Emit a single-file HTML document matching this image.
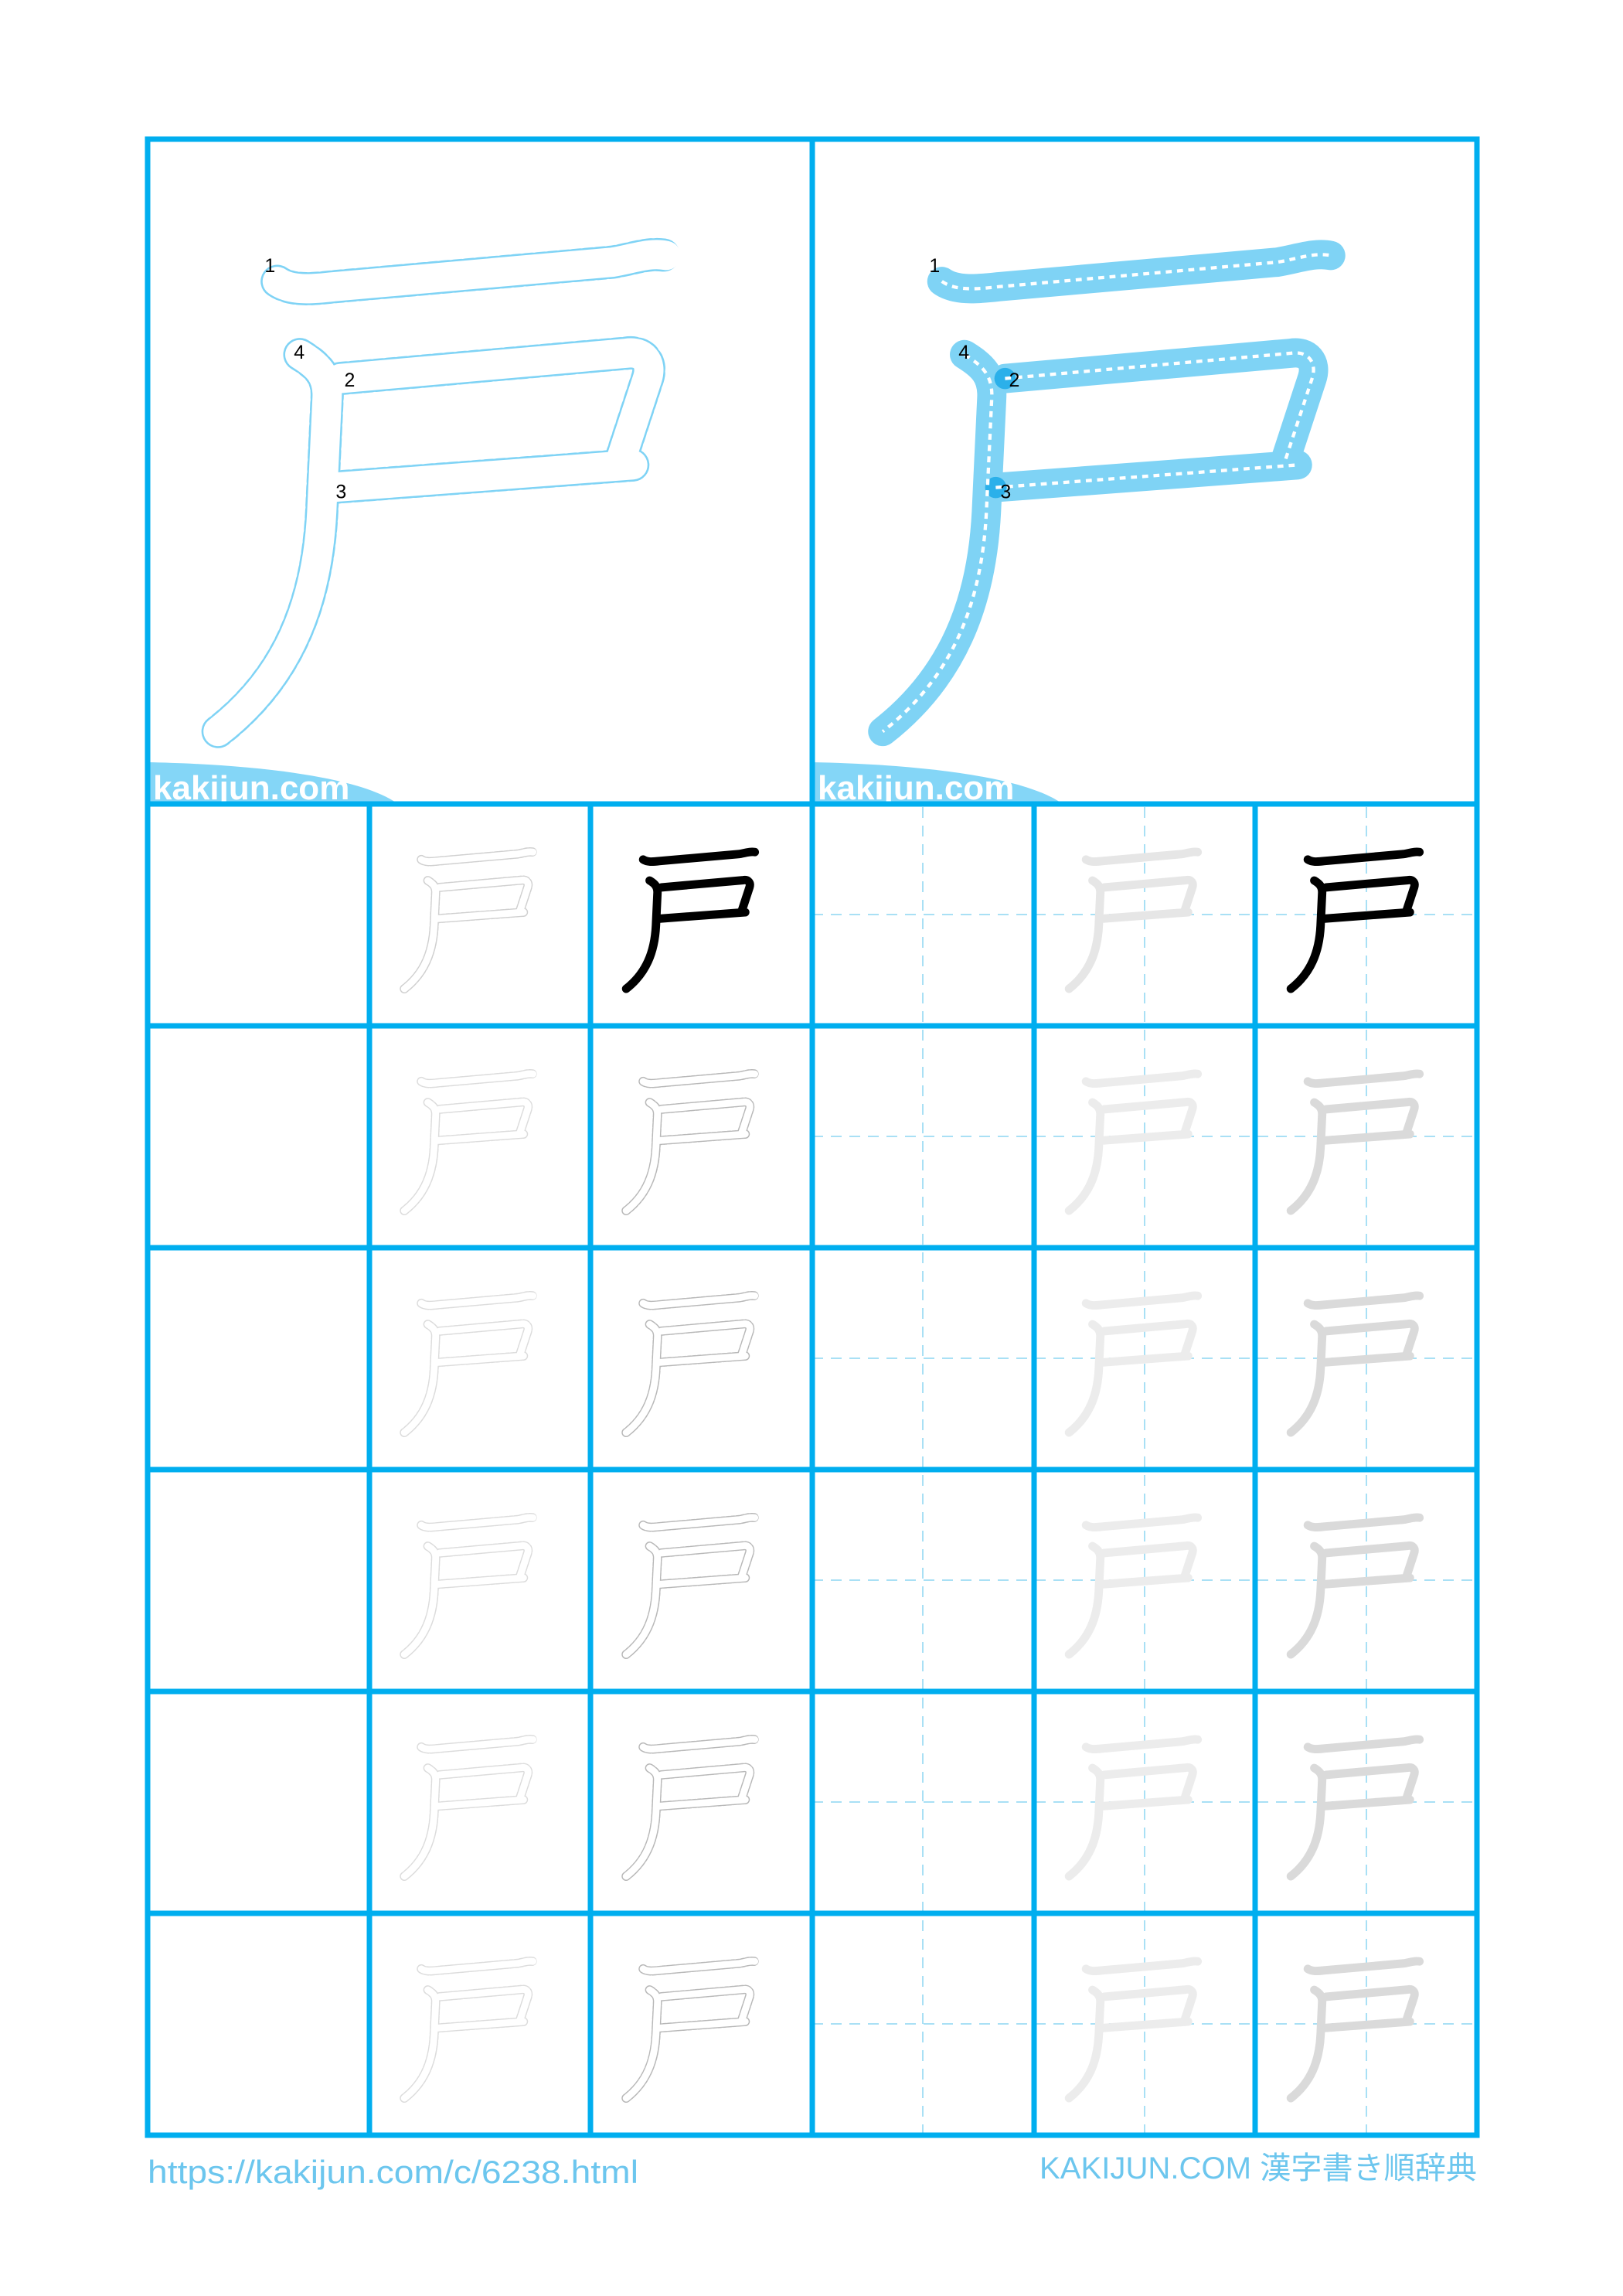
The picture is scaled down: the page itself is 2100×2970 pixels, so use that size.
<!DOCTYPE html>
<html><head><meta charset="utf-8"><style>
html,body{margin:0;padding:0;background:#fff}
svg{display:block}
</style></head><body>
<svg width="2100" height="2970" viewBox="0 0 2100 2970" xmlns="http://www.w3.org/2000/svg">
<rect width="2100" height="2970" fill="#fff"/>

<g stroke="#a9e0f5" stroke-width="2" stroke-dasharray="14 10" fill="none">
<line x1="1194" y1="1044" x2="1194" y2="2762"/>
<line x1="1481" y1="1044" x2="1481" y2="2762"/>
<line x1="1768" y1="1044" x2="1768" y2="2762"/>
<line x1="1051" y1="1183" x2="1911" y2="1183"/>
<line x1="1051" y1="1470" x2="1911" y2="1470"/>
<line x1="1051" y1="1757" x2="1911" y2="1757"/>
<line x1="1051" y1="2044" x2="1911" y2="2044"/>
<line x1="1051" y1="2331" x2="1911" y2="2331"/>
<line x1="1051" y1="2618" x2="1911" y2="2618"/>
</g>

<g transform="translate(191,180) scale(0.86)" fill="none" stroke-linecap="round" stroke-linejoin="round">
<g stroke="#7fd3f5" stroke-width="50" stroke-dasharray="10 8">
<path d="M195,214 C215,228 245,226 280,222 L700,185 C730,180 755,170 780,175"/>
<path d="M290,360 L720,322 C745,318 760,335 752,360 L712,482"/>
<path d="M276,524 L730,490"/>
<path d="M229,324 C255,340 272,355 270,390 L262,560 C255,700 210,810 106,891"/>
</g>
<g stroke="#fff" stroke-width="44">
<path d="M195,214 C215,228 245,226 280,222 L700,185 C730,180 755,170 780,175"/>
<path d="M290,360 L720,322 C745,318 760,335 752,360 L712,482"/>
<path d="M276,524 L730,490"/>
<path d="M229,324 C255,340 272,355 270,390 L262,560 C255,700 210,810 106,891"/>
</g>
<g font-family="Liberation Sans, sans-serif" font-size="29" fill="#000" stroke="none">
<text x="176" y="200">1</text><text x="220" y="330">4</text><text x="296" y="372">2</text><text x="283" y="540">3</text>
</g>
</g>

<g transform="translate(1051,180) scale(0.86)" fill="none" stroke-linecap="round" stroke-linejoin="round">
<g stroke="#7fd3f5" stroke-width="44">
<path d="M195,214 C215,228 245,226 280,222 L700,185 C730,180 755,170 780,175"/>
<path d="M290,360 L720,322 C745,318 760,335 752,360 L712,482"/>
<path d="M276,524 L730,490"/>
<path d="M229,324 C255,340 272,355 270,390 L262,560 C255,700 210,810 106,891"/>
</g>
<circle cx="290" cy="360" r="16" fill="#2bb0ea"/>
<circle cx="276" cy="524" r="16" fill="#2bb0ea"/>
<g stroke="#fff" stroke-width="5" stroke-dasharray="9 8" stroke-linecap="butt">
<path d="M195,214 C215,228 245,226 280,222 L700,185 C730,180 755,170 780,175"/>
<path d="M290,360 L720,322 C745,318 760,335 752,360 L712,482"/>
<path d="M276,524 L730,490"/>
<path d="M229,324 C255,340 272,355 270,390 L262,560 C255,700 210,810 106,891"/>
</g>
<g font-family="Liberation Sans, sans-serif" font-size="29" fill="#000" stroke="none">
<text x="176" y="200">1</text><text x="220" y="330">4</text><text x="296" y="372">2</text><text x="283" y="540">3</text>
</g>
</g>

<path d="M191,986 C300,988 460,1000 515,1040 L191,1040 Z" fill="#84d6f7"/>
<path d="M1051,986 C1160,988 1320,1000 1375,1040 L1051,1040 Z" fill="#84d6f7"/>
<text x="198" y="1034" font-family="Liberation Sans, sans-serif" font-weight="bold" font-size="44" fill="#fff">kakijun.com</text>
<text x="1058" y="1034" font-family="Liberation Sans, sans-serif" font-weight="bold" font-size="44" fill="#fff">kakijun.com</text>

<g fill="none" stroke-linecap="round" stroke-linejoin="round">
<!-- Row 1 -->
<g transform="translate(497,1059) scale(0.247)"><g stroke="#d0d0d0" stroke-width="48" stroke-dasharray="14 12"><path d="M195,214 C215,228 245,226 280,222 L700,185 C730,180 755,170 780,175"/><path d="M290,360 L720,322 C745,318 760,335 752,360 L712,482"/><path d="M276,524 L730,490"/><path d="M229,324 C255,340 272,355 270,390 L262,560 C255,700 210,810 106,891"/></g><g stroke="#fff" stroke-width="36"><path d="M195,214 C215,228 245,226 280,222 L700,185 C730,180 755,170 780,175"/><path d="M290,360 L720,322 C745,318 760,335 752,360 L712,482"/><path d="M276,524 L730,490"/><path d="M229,324 C255,340 272,355 270,390 L262,560 C255,700 210,810 106,891"/></g></g>
<g transform="translate(784,1059) scale(0.247)" stroke="#000" stroke-width="44"><path d="M195,214 C215,228 245,226 280,222 L700,185 C730,180 755,170 780,175"/><path d="M290,360 L720,322 C745,318 760,335 752,360 L712,482"/><path d="M276,524 L730,490"/><path d="M229,324 C255,340 272,355 270,390 L262,560 C255,700 210,810 106,891"/></g>
<g transform="translate(1357,1059) scale(0.247)" stroke="#e6e6e6" stroke-width="44"><path d="M195,214 C215,228 245,226 280,222 L700,185 C730,180 755,170 780,175"/><path d="M290,360 L720,322 C745,318 760,335 752,360 L712,482"/><path d="M276,524 L730,490"/><path d="M229,324 C255,340 272,355 270,390 L262,560 C255,700 210,810 106,891"/></g>
<g transform="translate(1644,1059) scale(0.247)" stroke="#000" stroke-width="44"><path d="M195,214 C215,228 245,226 280,222 L700,185 C730,180 755,170 780,175"/><path d="M290,360 L720,322 C745,318 760,335 752,360 L712,482"/><path d="M276,524 L730,490"/><path d="M229,324 C255,340 272,355 270,390 L262,560 C255,700 210,810 106,891"/></g>

<!-- Row 2 -->
<g transform="translate(497,1346) scale(0.247)"><g stroke="#dcdcdc" stroke-width="48" stroke-dasharray="14 12"><path d="M195,214 C215,228 245,226 280,222 L700,185 C730,180 755,170 780,175"/><path d="M290,360 L720,322 C745,318 760,335 752,360 L712,482"/><path d="M276,524 L730,490"/><path d="M229,324 C255,340 272,355 270,390 L262,560 C255,700 210,810 106,891"/></g><g stroke="#fff" stroke-width="36"><path d="M195,214 C215,228 245,226 280,222 L700,185 C730,180 755,170 780,175"/><path d="M290,360 L720,322 C745,318 760,335 752,360 L712,482"/><path d="M276,524 L730,490"/><path d="M229,324 C255,340 272,355 270,390 L262,560 C255,700 210,810 106,891"/></g></g>
<g transform="translate(784,1346) scale(0.247)"><g stroke="#b8b8b8" stroke-width="48" stroke-dasharray="14 12"><path d="M195,214 C215,228 245,226 280,222 L700,185 C730,180 755,170 780,175"/><path d="M290,360 L720,322 C745,318 760,335 752,360 L712,482"/><path d="M276,524 L730,490"/><path d="M229,324 C255,340 272,355 270,390 L262,560 C255,700 210,810 106,891"/></g><g stroke="#fff" stroke-width="36"><path d="M195,214 C215,228 245,226 280,222 L700,185 C730,180 755,170 780,175"/><path d="M290,360 L720,322 C745,318 760,335 752,360 L712,482"/><path d="M276,524 L730,490"/><path d="M229,324 C255,340 272,355 270,390 L262,560 C255,700 210,810 106,891"/></g></g>
<g transform="translate(1357,1346) scale(0.247)" stroke="#ececec" stroke-width="44"><path d="M195,214 C215,228 245,226 280,222 L700,185 C730,180 755,170 780,175"/><path d="M290,360 L720,322 C745,318 760,335 752,360 L712,482"/><path d="M276,524 L730,490"/><path d="M229,324 C255,340 272,355 270,390 L262,560 C255,700 210,810 106,891"/></g>
<g transform="translate(1644,1346) scale(0.247)" stroke="#dadada" stroke-width="44"><path d="M195,214 C215,228 245,226 280,222 L700,185 C730,180 755,170 780,175"/><path d="M290,360 L720,322 C745,318 760,335 752,360 L712,482"/><path d="M276,524 L730,490"/><path d="M229,324 C255,340 272,355 270,390 L262,560 C255,700 210,810 106,891"/></g>

<!-- Row 3 -->
<g transform="translate(497,1633) scale(0.247)"><g stroke="#dcdcdc" stroke-width="48" stroke-dasharray="14 12"><path d="M195,214 C215,228 245,226 280,222 L700,185 C730,180 755,170 780,175"/><path d="M290,360 L720,322 C745,318 760,335 752,360 L712,482"/><path d="M276,524 L730,490"/><path d="M229,324 C255,340 272,355 270,390 L262,560 C255,700 210,810 106,891"/></g><g stroke="#fff" stroke-width="36"><path d="M195,214 C215,228 245,226 280,222 L700,185 C730,180 755,170 780,175"/><path d="M290,360 L720,322 C745,318 760,335 752,360 L712,482"/><path d="M276,524 L730,490"/><path d="M229,324 C255,340 272,355 270,390 L262,560 C255,700 210,810 106,891"/></g></g>
<g transform="translate(784,1633) scale(0.247)"><g stroke="#b8b8b8" stroke-width="48" stroke-dasharray="14 12"><path d="M195,214 C215,228 245,226 280,222 L700,185 C730,180 755,170 780,175"/><path d="M290,360 L720,322 C745,318 760,335 752,360 L712,482"/><path d="M276,524 L730,490"/><path d="M229,324 C255,340 272,355 270,390 L262,560 C255,700 210,810 106,891"/></g><g stroke="#fff" stroke-width="36"><path d="M195,214 C215,228 245,226 280,222 L700,185 C730,180 755,170 780,175"/><path d="M290,360 L720,322 C745,318 760,335 752,360 L712,482"/><path d="M276,524 L730,490"/><path d="M229,324 C255,340 272,355 270,390 L262,560 C255,700 210,810 106,891"/></g></g>
<g transform="translate(1357,1633) scale(0.247)" stroke="#ececec" stroke-width="44"><path d="M195,214 C215,228 245,226 280,222 L700,185 C730,180 755,170 780,175"/><path d="M290,360 L720,322 C745,318 760,335 752,360 L712,482"/><path d="M276,524 L730,490"/><path d="M229,324 C255,340 272,355 270,390 L262,560 C255,700 210,810 106,891"/></g>
<g transform="translate(1644,1633) scale(0.247)" stroke="#dadada" stroke-width="44"><path d="M195,214 C215,228 245,226 280,222 L700,185 C730,180 755,170 780,175"/><path d="M290,360 L720,322 C745,318 760,335 752,360 L712,482"/><path d="M276,524 L730,490"/><path d="M229,324 C255,340 272,355 270,390 L262,560 C255,700 210,810 106,891"/></g>

<!-- Row 4 -->
<g transform="translate(497,1920) scale(0.247)"><g stroke="#dcdcdc" stroke-width="48" stroke-dasharray="14 12"><path d="M195,214 C215,228 245,226 280,222 L700,185 C730,180 755,170 780,175"/><path d="M290,360 L720,322 C745,318 760,335 752,360 L712,482"/><path d="M276,524 L730,490"/><path d="M229,324 C255,340 272,355 270,390 L262,560 C255,700 210,810 106,891"/></g><g stroke="#fff" stroke-width="36"><path d="M195,214 C215,228 245,226 280,222 L700,185 C730,180 755,170 780,175"/><path d="M290,360 L720,322 C745,318 760,335 752,360 L712,482"/><path d="M276,524 L730,490"/><path d="M229,324 C255,340 272,355 270,390 L262,560 C255,700 210,810 106,891"/></g></g>
<g transform="translate(784,1920) scale(0.247)"><g stroke="#b8b8b8" stroke-width="48" stroke-dasharray="14 12"><path d="M195,214 C215,228 245,226 280,222 L700,185 C730,180 755,170 780,175"/><path d="M290,360 L720,322 C745,318 760,335 752,360 L712,482"/><path d="M276,524 L730,490"/><path d="M229,324 C255,340 272,355 270,390 L262,560 C255,700 210,810 106,891"/></g><g stroke="#fff" stroke-width="36"><path d="M195,214 C215,228 245,226 280,222 L700,185 C730,180 755,170 780,175"/><path d="M290,360 L720,322 C745,318 760,335 752,360 L712,482"/><path d="M276,524 L730,490"/><path d="M229,324 C255,340 272,355 270,390 L262,560 C255,700 210,810 106,891"/></g></g>
<g transform="translate(1357,1920) scale(0.247)" stroke="#ececec" stroke-width="44"><path d="M195,214 C215,228 245,226 280,222 L700,185 C730,180 755,170 780,175"/><path d="M290,360 L720,322 C745,318 760,335 752,360 L712,482"/><path d="M276,524 L730,490"/><path d="M229,324 C255,340 272,355 270,390 L262,560 C255,700 210,810 106,891"/></g>
<g transform="translate(1644,1920) scale(0.247)" stroke="#dadada" stroke-width="44"><path d="M195,214 C215,228 245,226 280,222 L700,185 C730,180 755,170 780,175"/><path d="M290,360 L720,322 C745,318 760,335 752,360 L712,482"/><path d="M276,524 L730,490"/><path d="M229,324 C255,340 272,355 270,390 L262,560 C255,700 210,810 106,891"/></g>

<!-- Row 5 -->
<g transform="translate(497,2207) scale(0.247)"><g stroke="#dcdcdc" stroke-width="48" stroke-dasharray="14 12"><path d="M195,214 C215,228 245,226 280,222 L700,185 C730,180 755,170 780,175"/><path d="M290,360 L720,322 C745,318 760,335 752,360 L712,482"/><path d="M276,524 L730,490"/><path d="M229,324 C255,340 272,355 270,390 L262,560 C255,700 210,810 106,891"/></g><g stroke="#fff" stroke-width="36"><path d="M195,214 C215,228 245,226 280,222 L700,185 C730,180 755,170 780,175"/><path d="M290,360 L720,322 C745,318 760,335 752,360 L712,482"/><path d="M276,524 L730,490"/><path d="M229,324 C255,340 272,355 270,390 L262,560 C255,700 210,810 106,891"/></g></g>
<g transform="translate(784,2207) scale(0.247)"><g stroke="#b8b8b8" stroke-width="48" stroke-dasharray="14 12"><path d="M195,214 C215,228 245,226 280,222 L700,185 C730,180 755,170 780,175"/><path d="M290,360 L720,322 C745,318 760,335 752,360 L712,482"/><path d="M276,524 L730,490"/><path d="M229,324 C255,340 272,355 270,390 L262,560 C255,700 210,810 106,891"/></g><g stroke="#fff" stroke-width="36"><path d="M195,214 C215,228 245,226 280,222 L700,185 C730,180 755,170 780,175"/><path d="M290,360 L720,322 C745,318 760,335 752,360 L712,482"/><path d="M276,524 L730,490"/><path d="M229,324 C255,340 272,355 270,390 L262,560 C255,700 210,810 106,891"/></g></g>
<g transform="translate(1357,2207) scale(0.247)" stroke="#ececec" stroke-width="44"><path d="M195,214 C215,228 245,226 280,222 L700,185 C730,180 755,170 780,175"/><path d="M290,360 L720,322 C745,318 760,335 752,360 L712,482"/><path d="M276,524 L730,490"/><path d="M229,324 C255,340 272,355 270,390 L262,560 C255,700 210,810 106,891"/></g>
<g transform="translate(1644,2207) scale(0.247)" stroke="#dadada" stroke-width="44"><path d="M195,214 C215,228 245,226 280,222 L700,185 C730,180 755,170 780,175"/><path d="M290,360 L720,322 C745,318 760,335 752,360 L712,482"/><path d="M276,524 L730,490"/><path d="M229,324 C255,340 272,355 270,390 L262,560 C255,700 210,810 106,891"/></g>

<!-- Row 6 -->
<g transform="translate(497,2494) scale(0.247)"><g stroke="#dcdcdc" stroke-width="48" stroke-dasharray="14 12"><path d="M195,214 C215,228 245,226 280,222 L700,185 C730,180 755,170 780,175"/><path d="M290,360 L720,322 C745,318 760,335 752,360 L712,482"/><path d="M276,524 L730,490"/><path d="M229,324 C255,340 272,355 270,390 L262,560 C255,700 210,810 106,891"/></g><g stroke="#fff" stroke-width="36"><path d="M195,214 C215,228 245,226 280,222 L700,185 C730,180 755,170 780,175"/><path d="M290,360 L720,322 C745,318 760,335 752,360 L712,482"/><path d="M276,524 L730,490"/><path d="M229,324 C255,340 272,355 270,390 L262,560 C255,700 210,810 106,891"/></g></g>
<g transform="translate(784,2494) scale(0.247)"><g stroke="#b8b8b8" stroke-width="48" stroke-dasharray="14 12"><path d="M195,214 C215,228 245,226 280,222 L700,185 C730,180 755,170 780,175"/><path d="M290,360 L720,322 C745,318 760,335 752,360 L712,482"/><path d="M276,524 L730,490"/><path d="M229,324 C255,340 272,355 270,390 L262,560 C255,700 210,810 106,891"/></g><g stroke="#fff" stroke-width="36"><path d="M195,214 C215,228 245,226 280,222 L700,185 C730,180 755,170 780,175"/><path d="M290,360 L720,322 C745,318 760,335 752,360 L712,482"/><path d="M276,524 L730,490"/><path d="M229,324 C255,340 272,355 270,390 L262,560 C255,700 210,810 106,891"/></g></g>
<g transform="translate(1357,2494) scale(0.247)" stroke="#ececec" stroke-width="44"><path d="M195,214 C215,228 245,226 280,222 L700,185 C730,180 755,170 780,175"/><path d="M290,360 L720,322 C745,318 760,335 752,360 L712,482"/><path d="M276,524 L730,490"/><path d="M229,324 C255,340 272,355 270,390 L262,560 C255,700 210,810 106,891"/></g>
<g transform="translate(1644,2494) scale(0.247)" stroke="#dadada" stroke-width="44"><path d="M195,214 C215,228 245,226 280,222 L700,185 C730,180 755,170 780,175"/><path d="M290,360 L720,322 C745,318 760,335 752,360 L712,482"/><path d="M276,524 L730,490"/><path d="M229,324 C255,340 272,355 270,390 L262,560 C255,700 210,810 106,891"/></g>
</g>

<g stroke="#00aeef" stroke-width="7" fill="none">
<rect x="191" y="180" width="1720" height="2582"/>
<line x1="1051" y1="180" x2="1051" y2="2762"/>
<line x1="191" y1="1040" x2="1911" y2="1040"/>
<line x1="191" y1="1327" x2="1911" y2="1327"/>
<line x1="191" y1="1614" x2="1911" y2="1614"/>
<line x1="191" y1="1901" x2="1911" y2="1901"/>
<line x1="191" y1="2188" x2="1911" y2="2188"/>
<line x1="191" y1="2475" x2="1911" y2="2475"/>
<line x1="478" y1="1040" x2="478" y2="2762"/>
<line x1="764" y1="1040" x2="764" y2="2762"/>
<line x1="1338" y1="1040" x2="1338" y2="2762"/>
<line x1="1624" y1="1040" x2="1624" y2="2762"/>
</g>

<text x="191" y="2824" textLength="635" lengthAdjust="spacingAndGlyphs" font-family="Liberation Sans, sans-serif" font-size="42" fill="#6cc6ee">https://kakijun.com/c/6238.html</text>
<text x="1345" y="2818" textLength="566" lengthAdjust="spacingAndGlyphs" font-family="Liberation Sans, 'Noto Sans CJK JP', sans-serif" font-size="40" fill="#6cc6ee">KAKIJUN.COM 漢字書き順辞典</text>
</svg>
</body></html>
